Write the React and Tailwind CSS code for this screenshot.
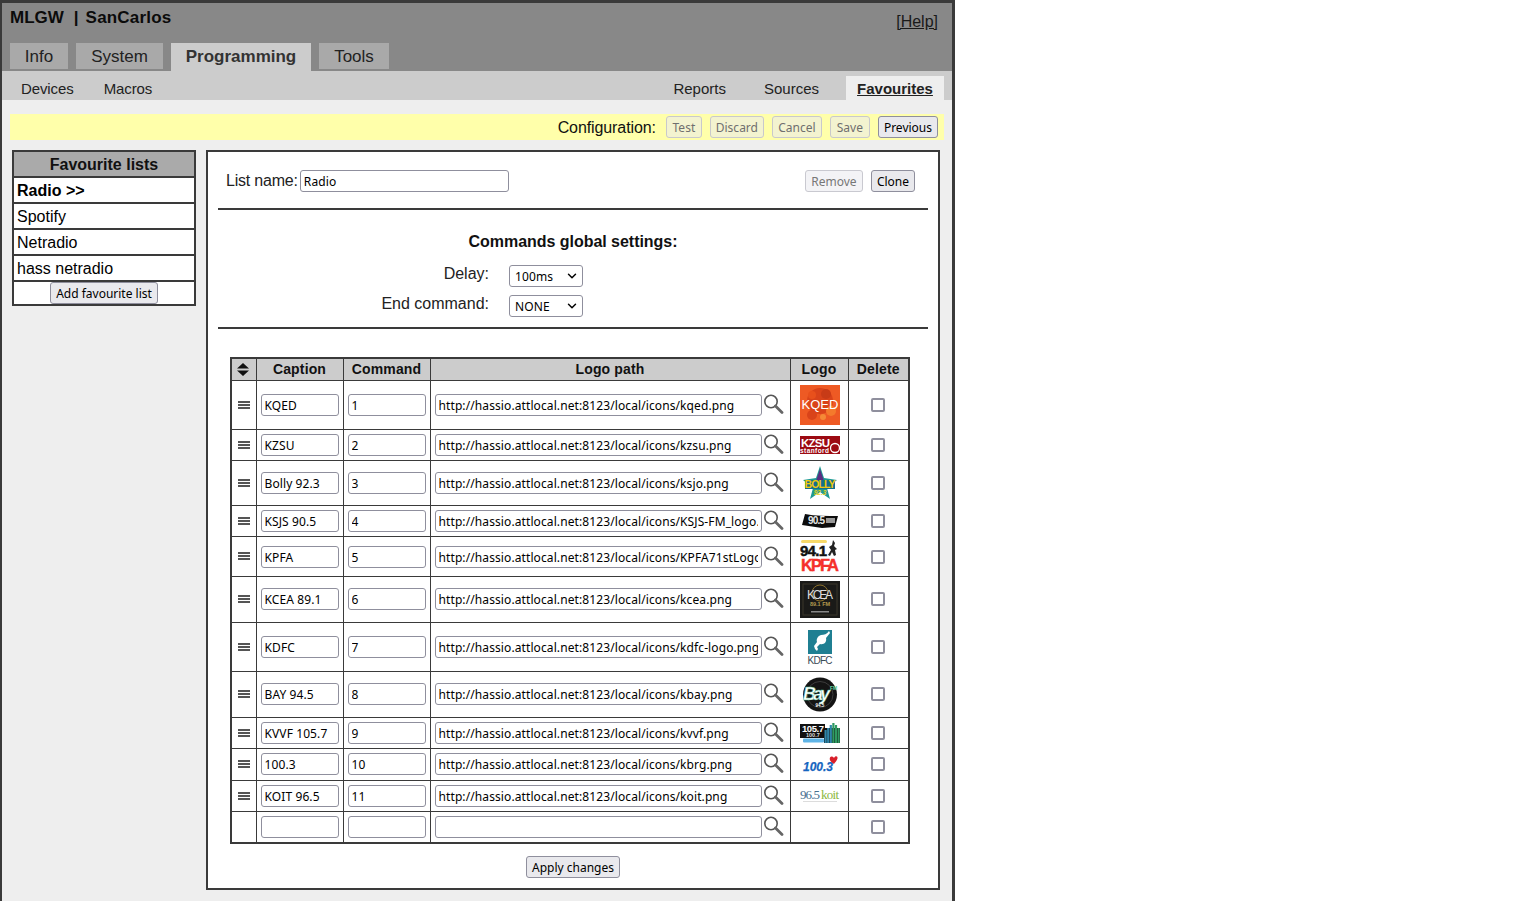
import { ChevronDown } from "lucide-react"

const btn = "h-[22px] px-[5px] pt-px rounded-[3px] border border-[#8f8f9d] bg-[#e9e9ed] text-[12px] leading-none text-black font-['Noto_Sans','Liberation_Sans',sans-serif]"
const btnOff = "h-[22px] pt-px rounded-[3px] border border-[#c9c9cc] bg-[#f3f3d0] text-[12px] leading-none text-[#6f6f6f] font-['Noto_Sans','Liberation_Sans',sans-serif]"
const field = "h-[22px] rounded-[3px] border border-[#8f8f9d] bg-white px-[3px] pt-px text-[12px] tracking-[0.1px] text-black outline-none font-['Noto_Sans','Liberation_Sans',sans-serif]"

function KqedLogo() {
  return (
    <svg width="40" height="40" viewBox="0 0 40 40">
      <rect width="40" height="40" fill="#ee5a24" />
      <circle cx="20" cy="16" r="13" fill="#d9431a" />
      <circle cx="12" cy="10" r="4" fill="#e8501c" />
      <circle cx="26" cy="9" r="5" fill="#c83b17" />
      <circle cx="31" cy="26" r="5" fill="#f47a2c" />
      <circle cx="12" cy="30" r="5" fill="#d9431a" />
      <circle cx="23" cy="32" r="3" fill="#f58a36" />
      <text x="20" y="24" textAnchor="middle" fontSize="13" fill="#fff" fontFamily="Liberation Sans">KQED</text>
    </svg>
  )
}

function KzsuLogo() {
  return (
    <svg width="40" height="18" viewBox="0 0 40 18">
      <rect width="40" height="18" fill="#9c0a12" />
      <text x="1" y="10.500" fontSize="11.500" fontWeight="700" fill="#fff" textLength="29" fontFamily="Liberation Sans">KZSU</text>
      <text x="0" y="17" fontSize="6.500" fontWeight="700" fill="#fff" textLength="29" fontFamily="Liberation Sans">stanford</text>
      <circle cx="35" cy="12" r="4.500" fill="none" stroke="#fff" strokeWidth="1.300" />
    </svg>
  )
}

function BollyLogo() {
  return (
    <svg width="36" height="34" viewBox="0 0 36 34">
      <polygon points="18,0 22,12 35,14 25,22 28,33 18,26 8,33 11,22 1,14 14,12" fill="#1f9a94" />
      <polygon points="18,3 22,15 14,15" fill="#5a2d82" />
      <rect x="3" y="14" width="30" height="9" fill="#14708a" />
      <text x="18" y="22" textAnchor="middle" fontSize="10.500" fontWeight="700" fill="#f2c80f" textLength="31" fontFamily="Liberation Sans">BOLLY</text>
      <text x="18" y="29" textAnchor="middle" fontSize="6.500" fontWeight="700" fontStyle="italic" fill="#e6d21e" fontFamily="Liberation Sans">92.3</text>
    </svg>
  )
}

function KsjsLogo() {
  return (
    <svg width="38" height="16" viewBox="0 0 38 16">
      <path d="M4 1c10 2 22 2 33 2l-3 11-13 1L1 12z" fill="#0c0c0c" />
      <text x="7" y="10.500" fontSize="10" fontWeight="700" fill="#e8e8e8" textLength="17" fontFamily="Liberation Sans">90.5</text>
      <rect x="25" y="5" width="9" height="5" fill="#999" />
    </svg>
  )
}

function KpfaLogo() {
  return (
    <svg width="40" height="38" viewBox="0 0 40 38">
      <rect x="1" y="3" width="26" height="3" rx="1.500" fill="#f7d96a" />
      <text x="0" y="19" fontSize="15" fontWeight="700" fill="#111" stroke="#111" strokeWidth="0.5" textLength="27" fontFamily="Liberation Sans">94.1</text>
      <path d="M33 3l2 3-1 3 3 3-2 1 1 5-2 1-2-4-2 4-2-1 3-5-2-3 3-2z" fill="#222" />
      <text x="1" y="34" fontSize="16.500" fontWeight="700" fill="#f5302c" stroke="#f5302c" strokeWidth="0.4" textLength="38" fontFamily="Liberation Sans">KPFA</text>
    </svg>
  )
}

function KceaLogo() {
  return (
    <svg width="40" height="37" viewBox="0 0 40 37">
      <rect width="40" height="37" fill="#1a1a18" />
      <rect x="3" y="3" width="34" height="31" fill="none" stroke="#3a362a" />
      <circle cx="20" cy="12" r="8" fill="none" stroke="#8a6f2c" />
      <text x="20" y="18" textAnchor="middle" fontSize="12" fill="#ddd" textLength="26" fontFamily="Liberation Sans">KCEA</text>
      <text x="20" y="25" textAnchor="middle" fontSize="5.500" fontWeight="700" fill="#b39a4f" fontFamily="Liberation Sans">89.1 FM</text>
      <rect x="11" y="30" width="18" height="1.500" fill="#888" />
    </svg>
  )
}

function KdfcLogo() {
  return (
    <svg width="26" height="34" viewBox="0 0 26 34">
      <rect x="1" y="0" width="24" height="24" fill="#1f7f92" />
      <path d="M22 1c-2 3-5 4-8 4-3 1-5 4-4 7l-3 4 1 3 2 2 1-2-1-2 3-3c4 1 7-2 6-6l4-5z" fill="#fff" />
      <text x="13" y="33.500" textAnchor="middle" fontSize="10" fill="#3b4a55" textLength="25" fontFamily="Liberation Sans">KDFC</text>
    </svg>
  )
}

function BayLogo() {
  return (
    <svg width="36" height="35" viewBox="0 0 36 35">
      <circle cx="18" cy="17.500" r="17" fill="#141414" />
      <circle cx="18" cy="17.500" r="13" fill="none" stroke="#3c3c3c" />
      <text x="1" y="23" fontSize="18" fontWeight="700" fontStyle="italic" fill="#fff" stroke="#47b890" strokeWidth="0.4" textLength="27" fontFamily="Liberation Sans">Bay</text>
      <text x="28" y="13" fontSize="5" fontWeight="700" fill="#5fd19f" fontFamily="Liberation Sans">FM</text>
      <text x="18" y="30" textAnchor="middle" fontSize="4.500" fontWeight="700" fill="#fff" fontFamily="Liberation Sans">94.5</text>
    </svg>
  )
}

function KvvfLogo() {
  const bars = [13, 15, 18, 20, 18, 15]
  return (
    <svg width="40" height="20" viewBox="0 0 40 20">
      <rect x="0" y="1" width="25" height="14" fill="#111" />
      <text x="2" y="8.500" fontSize="9.500" fontWeight="700" fill="#fff" textLength="22" fontFamily="Liberation Sans">105.7</text>
      <text x="6" y="14" fontSize="5.500" fontWeight="700" fill="#ddd" fontFamily="Liberation Sans">100.7</text>
      <rect x="3" y="15.500" width="21" height="4" rx="1" fill="#5fb4e6" />
      <rect x="24" y="5" width="16" height="15" fill="#111" />
      {bars.map((h, i) => (
        <rect key={i} x={24.500 + i * 2.600} y={20 - h} width="2.200" height={h} fill={i > 2 ? "#2f9a62" : "#2f86a8"} />
      ))}
    </svg>
  )
}

function BrgLogo() {
  return (
    <svg width="36" height="18" viewBox="0 0 36 18">
      <text x="1" y="16" fontSize="12" fontWeight="700" fontStyle="italic" fill="#1565c0" stroke="#1565c0" strokeWidth="0.25" fontFamily="Liberation Sans">100.3</text>
      <path d="M32 9c-3-2-5-4-4-6.500 1-1.500 3-1 4 .5 1-2.500 4-2.500 3.500.5-.5 2-2.500 4-3.500 5.500z" fill="#d81f2a" />
    </svg>
  )
}

function KoitLogo() {
  return (
    <svg width="40" height="16" viewBox="0 0 40 16">
      <text x="0" y="10.500" fontSize="13" fill="#46708f" textLength="20" fontFamily="Liberation Serif">96.5</text>
      <text x="21" y="10.500" fontSize="13" fill="#8cb83e" textLength="18" fontFamily="Liberation Serif">koit</text>
      <rect x="3" y="13" width="34" height="1" fill="#dcdcdc" />
    </svg>
  )
}

function SearchIcon() {
  return (
    <svg width="20" height="20" viewBox="0 0 20 20" className="shrink-0">
      <circle cx="7" cy="7.500" r="6.200" fill="none" stroke="#555" strokeWidth="1.600" />
      <path d="M11.500 12l6.500 6.500" stroke="#666" strokeWidth="2.800" strokeLinecap="round" />
    </svg>
  )
}

function GripIcon() {
  return (
    <svg width="12" height="8" viewBox="0 0 12 8" className="mx-auto">
      <rect y="0" width="12" height="2" fill="#555" />
      <rect y="3" width="12" height="2" fill="#555" />
      <rect y="6" width="12" height="2" fill="#555" />
    </svg>
  )
}

const rows = [
  { h: "h-[49px]", caption: "KQED", cmd: "1", path: "kqed.png", Logo: KqedLogo },
  { h: "h-[31px]", caption: "KZSU", cmd: "2", path: "kzsu.png", Logo: KzsuLogo },
  { h: "h-[45px]", caption: "Bolly 92.3", cmd: "3", path: "ksjo.png", Logo: BollyLogo },
  { h: "h-[31px]", caption: "KSJS 90.5", cmd: "4", path: "KSJS-FM_logo.png", Logo: KsjsLogo },
  { h: "h-[40px]", caption: "KPFA", cmd: "5", path: "KPFA71stLogo.png", Logo: KpfaLogo, nudge: "pt-px" },
  { h: "h-[46px]", caption: "KCEA 89.1", cmd: "6", path: "kcea.png", Logo: KceaLogo },
  { h: "h-[49px]", caption: "KDFC", cmd: "7", path: "kdfc-logo.png", Logo: KdfcLogo },
  { h: "h-[46px]", caption: "BAY 94.5", cmd: "8", path: "kbay.png", Logo: BayLogo },
  { h: "h-[31px]", caption: "KVVF 105.7", cmd: "9", path: "kvvf.png", Logo: KvvfLogo },
  { h: "h-[32px]", caption: "100.3", cmd: "10", path: "kbrg.png", Logo: BrgLogo },
  { h: "h-[31px]", caption: "KOIT 96.5", cmd: "11", path: "koit.png", Logo: KoitLogo },
  { h: "h-[32px]", caption: "", cmd: "", path: "", Logo: null },
]

const lists = ["Spotify", "Netradio", "hass netradio"]
const th = "border border-[#3a3a3a] bg-[#ccc] text-[14px] tracking-[0.15px] font-bold text-center p-0 leading-none text-[#111]"
const td = "border border-[#3a3a3a] p-0 align-middle"

function SelectBox({ value, width }) {
  return (
    <div className={`relative ${width}`}>
      <select
        defaultValue={value}
        className={`${field} block w-full appearance-none bg-[#e9e9ed] pl-[5px]`}
      >
        <option>{value}</option>
      </select>
      <ChevronDown className="absolute right-[4px] top-[4px] w-[14px] h-[14px] text-black pointer-events-none" strokeWidth={2.5} />
    </div>
  )
}

export default function App() {
  return (
    <div className="w-[955px] h-[901px] overflow-hidden border-t-[3px] border-l-2 border-r-[3px] border-[#3a3a3a] bg-[#eee] text-[#111] font-['Liberation_Sans',Arial,sans-serif]">
      <div className="h-[68px] bg-[#888] flex flex-col justify-between">
        <div className="flex justify-between pl-[8px] pr-[14px]">
          <div className="flex text-[17px] font-bold pt-[5px] leading-[20px] text-[#0b0b0b]">
            <span>MLGW</span>
            <span className="ml-[10px] mr-[7px]">|</span>
            <span className="tracking-[0.2px]">SanCarlos</span>
          </div>
          <a className="text-[16px] underline pt-[9px] leading-[20px] text-[#1a1a1a]">[Help]</a>
        </div>
        <div className="flex items-start gap-[8px] pl-[8px] h-[28px]">
          <div className="h-[26px] w-[58px] bg-[#a9a9a9] text-[17px] leading-[27px] text-center text-[#222]">Info</div>
          <div className="h-[26px] w-[87px] bg-[#a9a9a9] text-[17px] leading-[27px] text-center text-[#222]">System</div>
          <div className="h-[28px] w-[140px] bg-[#ccc] text-[17px] font-bold leading-[27px] text-center text-[#333]">Programming</div>
          <div className="h-[26px] w-[70px] bg-[#a9a9a9] text-[17px] leading-[27px] text-center text-[#222]">Tools</div>
        </div>
      </div>

      <div className="h-[29px] bg-[#ccc] flex items-end justify-between pl-[19px] pr-[8px] text-[15px] text-[#222]">
        <div className="flex gap-[30px] h-[24px] leading-[26px] tracking-[-0.1px]">
          <span>Devices</span>
          <span>Macros</span>
        </div>
        <div className="flex items-start h-[24px] leading-[26px]">
          <span>Reports</span>
          <span className="ml-[38px]">Sources</span>
          <span className="ml-[27px] h-[24px] w-[98px] bg-[#eee] text-center font-bold underline">Favourites</span>
        </div>
      </div>

      <div className="mt-[14px] mx-[8px] h-[26px] bg-[#ffffaa] flex items-center justify-end gap-[8px] pr-[6px]">
        <span className="text-[16px] leading-[24px] pt-[2px] mr-[2px] tracking-[-0.1px] text-[#111]">Configuration:</span>
        <button disabled className={`${btnOff} w-[36px]`}>Test</button>
        <button disabled className={`${btnOff} w-[54px]`}>Discard</button>
        <button disabled className={`${btnOff} w-[50px]`}>Cancel</button>
        <button disabled className={`${btnOff} w-[40px]`}>Save</button>
        <button className={btn}>Previous</button>
      </div>

      <div className="mt-[10px] flex items-start pl-[10px]">
        <div className="w-[184px] border-2 border-[#3a3a3a] bg-white text-[16px] text-black">
          <div className="h-[24px] bg-[#aaa] text-center font-bold leading-[26px] text-[#111]">Favourite lists</div>
          <div className="h-[26px] border-t-2 border-[#3a3a3a] pl-[3px] font-bold leading-[26px]">Radio &gt;&gt;</div>
          {lists.map((name) => (
            <div key={name} className="h-[26px] border-t-2 border-[#3a3a3a] pl-[3px] leading-[26px]">{name}</div>
          ))}
          <div className="h-[24px] border-t-2 border-[#3a3a3a] flex justify-center">
            <button className={btn}>Add favourite list</button>
          </div>
        </div>

        <div className="ml-[10px] w-[734px] h-[740px] border-2 border-[#3a3a3a] bg-white px-[10px]">
          <div className="h-[56px] flex items-start pt-[18px]">
            <span className="ml-[8px] text-[16px] leading-[21px] tracking-[-0.2px] text-[#222]">List name:</span>
            <input readOnly value="Radio" className={`${field} w-[209px] ml-[2px]`} />
            <button disabled className="ml-auto h-[22px] w-[58px] pt-px rounded-[3px] border border-[#c9c9d0] bg-[#f3f3f6] text-[12px] leading-none text-[#777] font-['Noto_Sans','Liberation_Sans',sans-serif]">Remove</button>
            <button className={`${btn} ml-[8px] mr-[13px]`}>Clone</button>
          </div>
          <div className="h-[2px] bg-[#3a3a3a]" />

          <div className="h-[117px]">
            <div className="pt-[22px] text-center text-[16px] font-bold leading-[20px] tracking-[-0.03px] text-[#111]">Commands global settings:</div>
            <div className="mt-[13px] flex items-start">
              <span className="w-[271px] text-right text-[16px] leading-[18px] text-[#222]">Delay:</span>
              <div className="ml-[20px]"><SelectBox value="100ms" width="w-[74px]" /></div>
            </div>
            <div className="mt-[8px] flex items-start">
              <span className="w-[271px] text-right text-[16px] leading-[18px] text-[#222]">End command:</span>
              <div className="ml-[20px]"><SelectBox value="NONE" width="w-[74px]" /></div>
            </div>
          </div>
          <div className="h-[2px] bg-[#3a3a3a]" />

          <table className="mt-[28px] ml-[12px] w-[680px] table-fixed border-collapse border-2 border-[#3a3a3a]">
            <colgroup>
              <col className="w-[25px]" />
              <col className="w-[87px]" />
              <col className="w-[87px]" />
              <col className="w-[360px]" />
              <col className="w-[58px]" />
              <col />
            </colgroup>
            <thead>
              <tr className="h-[22px]">
                <th className={th}>
                  <svg width="12" height="13" viewBox="0 0 12 13" className="mx-auto -translate-x-px">
                    <path d="M6 0l6 5.500H0zM6 13l6-5.500H0z" fill="#111" />
                  </svg>
                </th>
                <th className={th}>Caption</th>
                <th className={th}>Command</th>
                <th className={th}>Logo path</th>
                <th className={th}>Logo</th>
                <th className={th}>Delete</th>
              </tr>
            </thead>
            <tbody>
              {rows.map((row, i) => (
                <tr key={i} className={row.h}>
                  <td className={td}>{row.Logo && <GripIcon />}</td>
                  <td className={`${td} ${row.nudge || ""}`}>
                    <input readOnly value={row.caption} className={`${field} w-[78px] block mx-auto`} />
                  </td>
                  <td className={`${td} ${row.nudge || ""}`}>
                    <input readOnly value={row.cmd} className={`${field} w-[78px] block mx-auto`} />
                  </td>
                  <td className={`${td} ${row.nudge || ""}`}>
                    <div className="flex items-start pl-[4px] gap-[2px]">
                      <input
                        readOnly
                        value={row.path ? `http://hassio.attlocal.net:8123/local/icons/${row.path}` : ""}
                        className={`${field} w-[327px]`}
                      />
                      <SearchIcon />
                    </div>
                  </td>
                  <td className={td}>
                    {row.Logo && <div className="flex justify-center pl-px"><row.Logo /></div>}
                  </td>
                  <td className={`${td} ${row.nudge || ""}`}>
                    <input type="checkbox" className="block mx-auto appearance-none w-[14px] h-[14px] border-2 border-[#8f8f9d] rounded-[2px] bg-white" />
                  </td>
                </tr>
              ))}
            </tbody>
          </table>

          <div className="mt-[12px] flex justify-center">
            <button className={btn}>Apply changes</button>
          </div>
        </div>
      </div>
    </div>
  )
}
